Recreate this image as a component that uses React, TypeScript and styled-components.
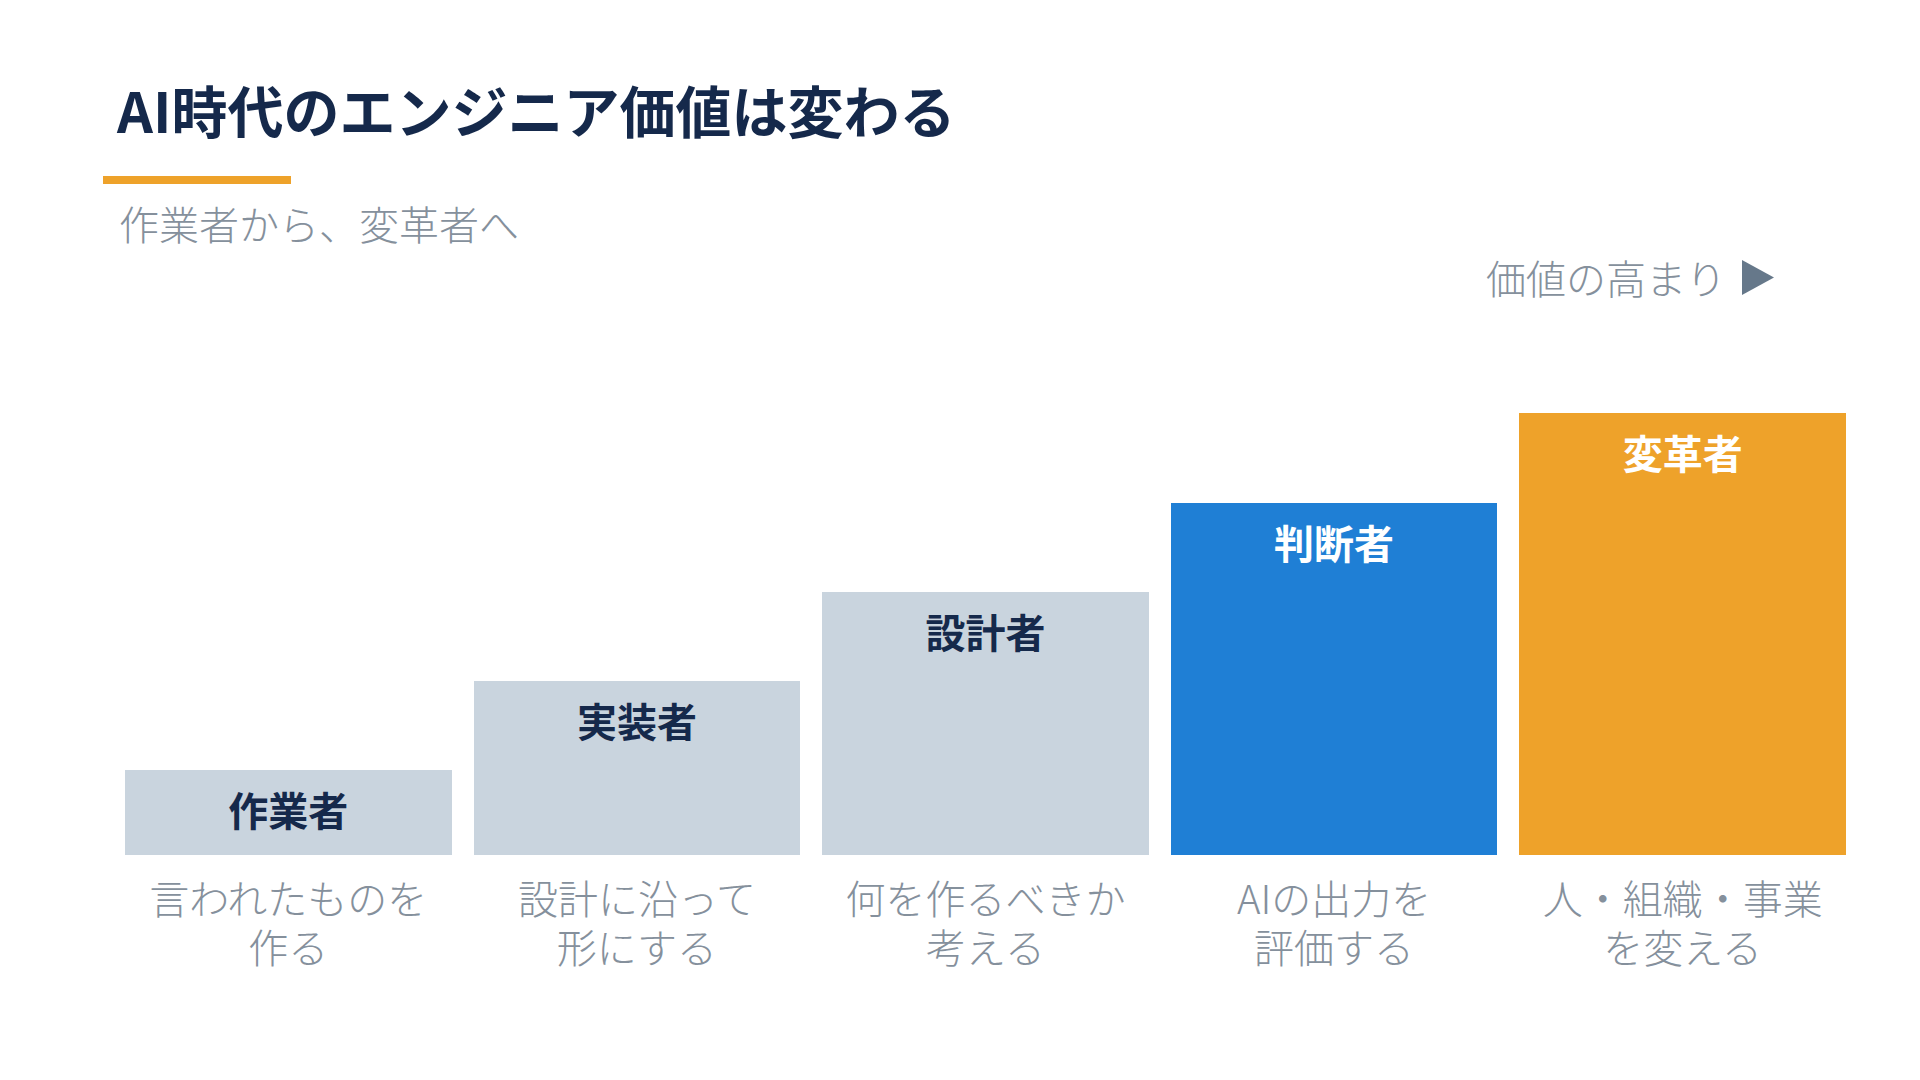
import React, { FunctionComponent } from 'react'
import styled, { createGlobalStyle } from 'styled-components'

const navy = '#15294b'
const slate = '#85909c'
const barGrey = '#c9d4de'
const barBlue = '#1f7fd5'
const barOrange = '#eea22a'

const fontStack = `"Noto Sans CJK JP", "Noto Sans", sans-serif`
const lightStack = `"Noto Sans CJK JP Light", "Noto Sans CJK JP DemiLight", "Noto Sans CJK JP", "Noto Sans", sans-serif`

interface Step {
    label : string
    desc : string[]
    height : number
    color : string
    labelColor : string
}

const steps : Step[] = [
    { label : '作業者', desc : ['言われたものを', '作る'], height : 85, color : barGrey, labelColor : navy },
    { label : '実装者', desc : ['設計に沿って', '形にする'], height : 174, color : barGrey, labelColor : navy },
    { label : '設計者', desc : ['何を作るべきか', '考える'], height : 263, color : barGrey, labelColor : navy },
    { label : '判断者', desc : ['AIの出力を', '評価する'], height : 352, color : barBlue, labelColor : '#ffffff' },
    { label : '変革者', desc : ['人・組織・事業', 'を変える'], height : 442, color : barOrange, labelColor : '#ffffff' },
]

const GlobalStyle = createGlobalStyle`
    body {
        margin : 0;
        background : #ffffff;
        font-family : ${fontStack};
    }
`

const Slide = styled.div`
    width : 1920px;
    height : 1080px;
    box-sizing : border-box;
    padding : 76px 74px 0 103px;
    display : flex;
    flex-direction : column;
    background : #ffffff;
    overflow : hidden;
`

const Title = styled.h1`
    margin : 0 0 0 14px;
    font-size : 56px;
    font-weight : 700;
    line-height : 65px;
    color : ${navy};
`

const Accent = styled.div`
    width : 188px;
    height : 8px;
    margin-top : 35px;
    background : ${barOrange};
`

const Subtitle = styled.p`
    margin : 13px 0 0 16px;
    font-family : ${lightStack};
    font-size : 40px;
    font-weight : 300;
    line-height : 52px;
    color : ${slate};
`

const ValueHint = styled.div`
    display : flex;
    justify-content : flex-end;
    align-items : center;
    gap : 16px;
    margin-top : 4px;
    padding-right : 72px;
    height : 48px;

    span {
        font-family : ${lightStack};
        font-size : 40px;
        font-weight : 300;
        line-height : 48px;
        color : ${slate};
    }
`

const Columns = styled.div`
    display : grid;
    grid-template-columns : repeat(5, 1fr);
    column-gap : 22px;
    padding-left : 22px;
`

const Chart = styled(Columns)`
    height : 442px;
    margin-top : 112px;
    align-items : end;
`

const Bar = styled.div<{ $color : string, $labelColor : string }>`
    box-sizing : border-box;
    padding-top : 15px;
    background : ${p => p.$color};
    color : ${p => p.$labelColor};
    text-align : center;
    font-size : 40px;
    font-weight : 700;
    line-height : 48px;
`

const Descs = styled(Columns)`
    margin-top : 18px;
`

const Desc = styled.p`
    margin : 0;
    text-align : center;
    font-family : ${lightStack};
    font-size : 40px;
    font-weight : 300;
    line-height : 49px;
    color : ${slate};
`

const Arrow : FunctionComponent = () => (
    <svg width="32" height="35" viewBox="0 0 32 35">
        <polygon points="0,0 32,17.5 0,35" fill="#66788a" />
    </svg>
)

const App : FunctionComponent = () => {
    return (
        <>
            <GlobalStyle />
            <Slide>
                <Title>AI時代のエンジニア価値は変わる</Title>
                <Accent />
                <Subtitle>作業者から、変革者へ</Subtitle>

                <ValueHint>
                    <span>価値の高まり</span>
                    <Arrow />
                </ValueHint>

                <Chart>
                    {steps.map(s =>
                        <Bar key={s.label} $color={s.color} $labelColor={s.labelColor} style={{ height : s.height }}>
                            {s.label}
                        </Bar>
                    )}
                </Chart>

                <Descs>
                    {steps.map(s =>
                        <Desc key={s.label}>
                            {s.desc[0]}<br />{s.desc[1]}
                        </Desc>
                    )}
                </Descs>
            </Slide>
        </>
    )
}

export default App
